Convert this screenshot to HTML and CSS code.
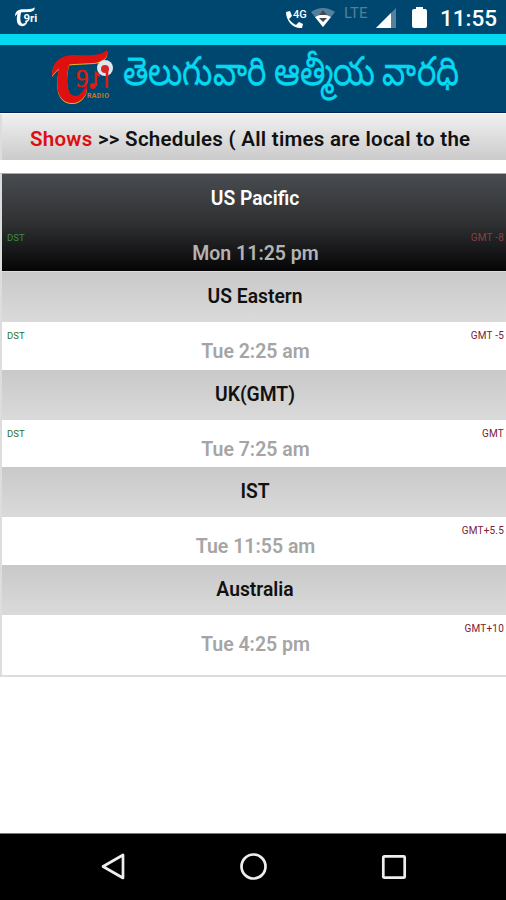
FILE: index.html
```html
<!DOCTYPE html>
<html lang="en">
<head>
  <meta charset="UTF-8">
  <meta name="viewport" content="width=device-width, initial-scale=1.0">
  <title>TORi Radio - Schedules</title>
  <link rel="stylesheet" href="styles.css">
</head>
<body>
  <svg width="0" height="0" class="defs">
    <symbol id="logo-swoosh" viewBox="0 0 64 56">
      <path d="M1 27C1 12 10 6 24 6C40 7 51 6 56 1C58 8 52 13 43 14L24 15C12 15 7 19 1 27Z"/>
      <path d="M9 15L19 13C15 25 14 46 24 47C30 47 32 41 36 36C37 46 30 55 20 54C3 52 5 31 9 15Z"/>
    </symbol>
  </svg>

  <div class="status-bar">
    <svg class="app-icon" width="24" height="20" viewBox="0 0 64 56" fill="#fff">
      <use href="#logo-swoosh" width="64" height="56"/>
      <text x="25" y="42" font-size="32" font-weight="700">9ri</text>
    </svg>
    <svg class="call" width="24" height="22" viewBox="0 0 24 22">
      <path d="M2 4L6 3L8 8L5 11C7 14 9 15 12 17L15 14L19 16L18 20C9 21 2 13 2 4Z" fill="#fff"/>
      <text x="9" y="10" font-size="11" font-weight="500" fill="#fff">4G</text>
    </svg>
    <svg class="wifi" width="24" height="20" viewBox="0 0 24 20">
      <path d="M0 4Q12-4 24 4L12 19Z" fill="#567f9b"/>
      <path d="M4 9Q12 4 20 9L12 19Z" fill="#fff"/>
      <path d="M12 2L16 7H8ZM8 10H16L12 14Z" fill="#434b50"/>
    </svg>
    <span class="lte">LTE</span>
    <svg class="signal" width="21" height="21" viewBox="0 0 21 21">
      <path d="M0 20L20 0V20Z" fill="#56809b"/>
      <path d="M0 20L15 5V20Z" fill="#fff"/>
    </svg>
    <svg class="battery" width="15" height="21" viewBox="0 0 15 21">
      <path d="M4 0H11V2H13Q15 2 15 4V19Q15 21 13 21H2Q0 21 0 19V4Q0 2 2 2H4Z" fill="#fff"/>
    </svg>
    <span class="clock">11:55</span>
  </div>

  <header>
    <svg class="logo" width="64" height="56" viewBox="0 0 64 56">
      <use href="#logo-swoosh" width="64" height="56" x="1" y="1" fill="#e3b51c"/>
      <use href="#logo-swoosh" width="64" height="56" x="1" fill="#df1010"/>
      <circle cx="55" cy="19" r="8" fill="#dfe6ec"/>
      <text class="logo-nine" x="26" y="38">9</text>
      <path d="M46 37V24L50 27M57 20V39" fill="none" stroke="#df1d12" stroke-width="2.5"/>
      <circle cx="43" cy="37" r="3" fill="#df1d12"/>
      <circle cx="55" cy="20" r="4" fill="#d9242a"/>
      <text class="logo-radio" x="37" y="49" textLength="22">RADIO</text>
    </svg>
    <svg class="tagline" lang="te" width="340" height="64" viewBox="0 0 340 64">
      <text x="1" y="36" textLength="336" lengthAdjust="spacingAndGlyphs">తెలుగువారి ఆత్మీయ వారధి</text>
    </svg>
  </header>

  <main>
    <h1><span>Shows</span> &gt;&gt; Schedules ( All times are local to the</h1>

    <section class="schedule">
      <div class="zone current">
        <h2>US Pacific</h2>
        <div class="zone-time">
          <span class="dst">DST</span>
          <span class="time">Mon 11:25 pm</span>
          <span class="gmt">GMT -8</span>
        </div>
      </div>
      <div class="zone">
        <h2>US Eastern</h2>
        <div class="zone-time">
          <span class="dst">DST</span>
          <span class="time">Tue 2:25 am</span>
          <span class="gmt">GMT -5</span>
        </div>
      </div>
      <div class="zone">
        <h2>UK(GMT)</h2>
        <div class="zone-time">
          <span class="dst">DST</span>
          <span class="time">Tue 7:25 am</span>
          <span class="gmt">GMT</span>
        </div>
      </div>
      <div class="zone">
        <h2>IST</h2>
        <div class="zone-time">
          <span class="dst"></span>
          <span class="time">Tue 11:55 am</span>
          <span class="gmt">GMT+5.5</span>
        </div>
      </div>
      <div class="zone">
        <h2>Australia</h2>
        <div class="zone-time">
          <span class="dst"></span>
          <span class="time">Tue 4:25 pm</span>
          <span class="gmt">GMT+10</span>
        </div>
      </div>
    </section>
  </main>

  <nav>
    <svg width="28" height="28" viewBox="0 0 28 28"><path d="M24 2V25L4 13.5Z"/></svg>
    <svg width="28" height="28" viewBox="0 0 28 28"><circle cx="13.5" cy="13.5" r="12"/></svg>
    <svg width="28" height="28" viewBox="0 0 28 28"><rect x="3.3" y="3.3" width="21.4" height="21.4" rx="1"/></svg>
  </nav>
</body>
</html>
```
FILE: styles.css
```css
:root {
  --header-bg: #00476f;
  --accent-color: #05d9f2;
  --border-color: #ddd;
  --dst-color: #23752b;
  --gmt-color: #7b2030;
}

* {
  box-sizing: border-box;
}

body {
  display: flex;
  flex-direction: column;
  height: 900px;
  margin: 0;
  overflow: hidden;
  background: #fff;
  font-family: Roboto, "Liberation Sans", sans-serif;
}

.defs {
  display: none;
}

.status-bar {
  display: flex;
  height: 34px;
  padding: 0 11px 0 14px;
  background: var(--header-bg);
  color: #fff;
  flex: none;
}

.status-bar svg {
  flex: none;
}

.app-icon {
  margin-top: 7px;
}

.call {
  margin: 8px 3px 0 auto;
}

.wifi {
  margin: 8px 9px 0 0;
}

.lte {
  width: 26px;
  padding-top: 5px;
  font-size: 15px;
  line-height: 17px;
  color: #557e99;
}

.signal {
  margin: 8px 15px 0 6px;
}

.battery {
  margin: 7px 13px 0 0;
}

.clock {
  width: 55px;
  padding-top: 5px;
  font-size: 22.5px;
  font-weight: 500;
  line-height: 27px;
  white-space: nowrap;
}

header {
  display: flex;
  height: 79px;
  padding: 4px 0 0 50px;
  border-top: 11px solid var(--accent-color);
  border-bottom: 1px solid #002755;
  background: var(--header-bg);
  flex: none;
}

.logo-nine {
  font: 25px "Liberation Serif", serif;
  fill: #df1d12;
  stroke: #df1d12;
  stroke-width: 0.6;
}

.logo-radio {
  font-size: 7px;
  font-weight: 700;
  fill: #c77724;
}

.tagline {
  margin-left: 8px;
  font-size: 40px;
  overflow: visible;
}

.tagline text {
  fill: var(--accent-color);
  stroke: var(--accent-color);
  stroke-width: 0.3;
}

main {
  flex: 1;
}

h1 {
  height: 46px;
  margin: 1px 0 13px;
  padding-left: 28px;
  border-left: 2px solid var(--border-color);
  background: linear-gradient(#f0f0f0, #cbcbcb);
  color: #111;
  font-size: 20.5px;
  font-weight: 600;
  line-height: 51px;
  letter-spacing: 0.27px;
  white-space: nowrap;
}

h1 span {
  color: #df0d12;
}

.schedule {
  height: 504px;
  border-left: 2px solid var(--border-color);
  border-top: 1px solid #aaa;
  border-bottom: 2px solid var(--border-color);
}

.zone {
  height: 97.75px;
}

h2 {
  height: 50px;
  margin: 0;
  padding-left: 2px;
  background: linear-gradient(#c9c9c9, #dadada);
  color: #111;
  font-size: 19.3px;
  font-weight: 600;
  line-height: 50px;
  text-align: center;
}

.zone-time {
  display: grid;
  grid-template-columns: 70px 1fr 70px;
  padding: 0 2px 0 5px;
}

.dst,
.gmt {
  padding-top: 8px;
  font-size: 9.5px;
  line-height: 12px;
}

.dst {
  color: var(--dst-color);
}

.gmt {
  color: var(--gmt-color);
  font-size: 10px;
  letter-spacing: 0.2px;
  text-align: right;
}

.time {
  padding-top: 18px;
  color: #a5a5a5;
  font-size: 19.5px;
  font-weight: 600;
  line-height: 24px;
  text-align: center;
}

.current {
  background: linear-gradient(#484c50, #303133 50%, #050506);
  border-bottom: 1px solid #ddd;
}

.current h2 {
  background: none;
  color: #fff;
}

.current .dst {
  color: #3b8c43;
}

.current .gmt {
  color: #8e3f3c;
}

.current .time {
  color: #b3b3b3;
}

nav {
  display: flex;
  height: 67px;
  padding: 0 98px 0 99px;
  border-top: 1px solid #777;
  background: #000;
  justify-content: space-between;
  align-items: center;
  flex: none;
}

nav svg {
  fill: none;
  stroke: #eee;
  stroke-width: 2.7;
  stroke-linejoin: round;
}
```
